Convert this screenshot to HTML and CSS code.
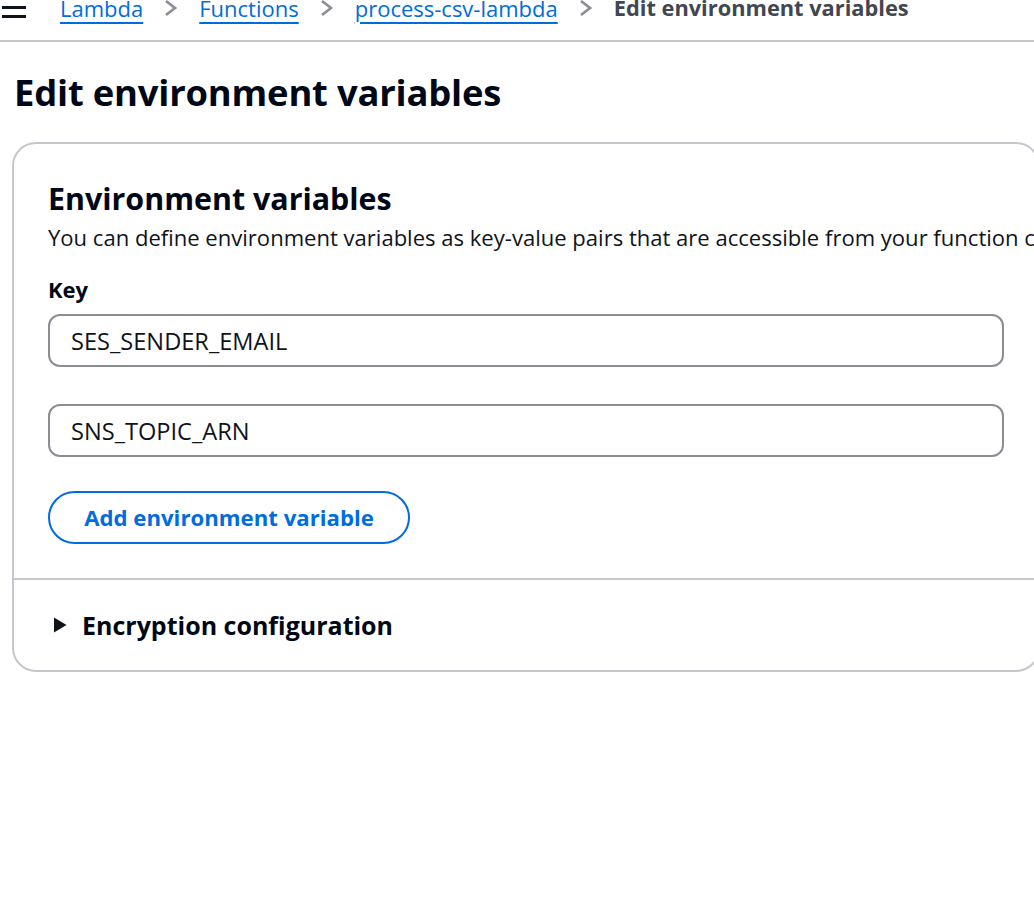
FILE: index.html
```html
<!DOCTYPE html>
<html>
<head>
<meta charset="utf-8">
<link rel="stylesheet" href="styles.css">
</head>
<body>
<header class="topbar">
  <span class="menu" aria-label="Menu">
    <svg width="26" height="26" viewBox="0 0 26 26"><rect x="2" y="1" width="24" height="3"/><rect x="2" y="10" width="24" height="3"/><rect x="2" y="19" width="24" height="3"/></svg>
  </span>
  <nav class="crumbs">
    <a class="crumb" href="#">Lambda</a>
    <svg class="chev" width="14" height="20" viewBox="0 0 14 20"><path d="M2 3 L11 10 L2 17" fill="none" stroke-width="2.6" stroke-linejoin="miter"/></svg>
    <a class="crumb" href="#">Functions</a>
    <svg class="chev" width="14" height="20" viewBox="0 0 14 20"><path d="M2 3 L11 10 L2 17" fill="none" stroke-width="2.6" stroke-linejoin="miter"/></svg>
    <a class="crumb" href="#">process-csv-lambda</a>
    <svg class="chev" width="14" height="20" viewBox="0 0 14 20"><path d="M2 3 L11 10 L2 17" fill="none" stroke-width="2.6" stroke-linejoin="miter"/></svg>
    <span class="current">Edit environment variables</span>
  </nav>
</header>
<main class="content">
  <h1 class="title">Edit environment variables</h1>
  <section class="card">
    <div class="card-body">
      <h2 class="card-title">Environment variables</h2>
      <p class="desc">You can define environment variables as key-value pairs that are accessible from your function code.</p>
      <div class="label">Key</div>
      <div class="input">SES_SENDER_EMAIL</div>
      <div class="input">SNS_TOPIC_ARN</div>
      <button class="btn">Add environment variable</button>
    </div>
    <div class="card-footer">
      <svg class="caret" width="14" height="16" viewBox="0 0 14 16"><path d="M1 0.5 L13.5 8 L1 15.5 Z"/></svg>
      <span class="expand-label">Encryption configuration</span>
    </div>
  </section>
</main>
</body>
</html>
```

FILE: styles.css
```css
html, body {
  margin: 0;
  padding: 0;
  background: #ffffff;
  overflow: hidden;
}
body {
  font-family: "Open Sans", "Noto Sans", sans-serif;
  color: #000716;
  width: 1034px;
  height: 906px;
}
.topbar {
  display: flex;
  align-items: center;
  height: 56px;
  margin-top: -14px;
  padding-bottom: 11px;
  border-bottom: 2px solid #c6c6cd;
  box-sizing: border-box;
}
.menu {
  display: flex;
  width: 60px;
  margin-top: 2px;
}
.menu svg {
  fill: #0f141a;
}
.crumbs {
  display: flex;
  align-items: center;
  gap: 21px;
  font-size: 22px;
  white-space: nowrap;
}
.crumb {
  color: #006ce0;
  text-decoration: underline;
  text-underline-offset: 5px;
  text-decoration-thickness: 1.5px;
}
.chev {
  stroke: #8c8c94;
}
.current {
  color: #424650;
  font-weight: 700;
  font-size: 21.8px;
}
.content {
  padding: 0 0 0 12px;
}
.title {
  margin: 26px 0 26px 2px;
  font-size: 36.4px;
  font-weight: 700;
  line-height: 48px;
  letter-spacing: -0.2px;
}
.card {
  width: 1028px;
  border: 2px solid #c6c6cd;
  border-radius: 24px;
  box-sizing: border-box;
}
.card-body {
  padding: 35px 34px 34px 34px;
  border-bottom: 2px solid #c6c6cd;
}
.card-title {
  margin: 0;
  font-size: 30.4px;
  font-weight: 700;
  line-height: 40px;
}
.desc {
  margin: 2px 0 0;
  font-size: 22.05px;
  line-height: 32px;
  white-space: nowrap;
  color: #0f141a;
}
.label {
  margin-top: 21px;
  font-size: 22px;
  font-weight: 700;
  line-height: 30px;
}
.input {
  margin-top: 10px;
  height: 53px;
  border: 2px solid #8c8c94;
  border-radius: 12px;
  box-sizing: border-box;
  padding: 0 21px;
  display: flex;
  align-items: center;
  font-size: 23.6px;
  color: #0f141a;
}
.input + .input {
  margin-top: 37px;
}
.btn {
  display: block;
  margin-top: 34px;
  height: 53px;
  width: 362px;
  border: 2px solid #006ce0;
  border-radius: 27px;
  background: #ffffff;
  color: #006ce0;
  font-family: "Open Sans", "Noto Sans", sans-serif;
  font-size: 22.2px;
  font-weight: 700;
  padding: 0;
}
.card-footer {
  display: flex;
  align-items: center;
  gap: 15px;
  height: 90px;
  padding-left: 39px;
}
.caret {
  fill: #0f141a;
}
.expand-label {
  font-size: 25px;
  font-weight: 700;
}
```
